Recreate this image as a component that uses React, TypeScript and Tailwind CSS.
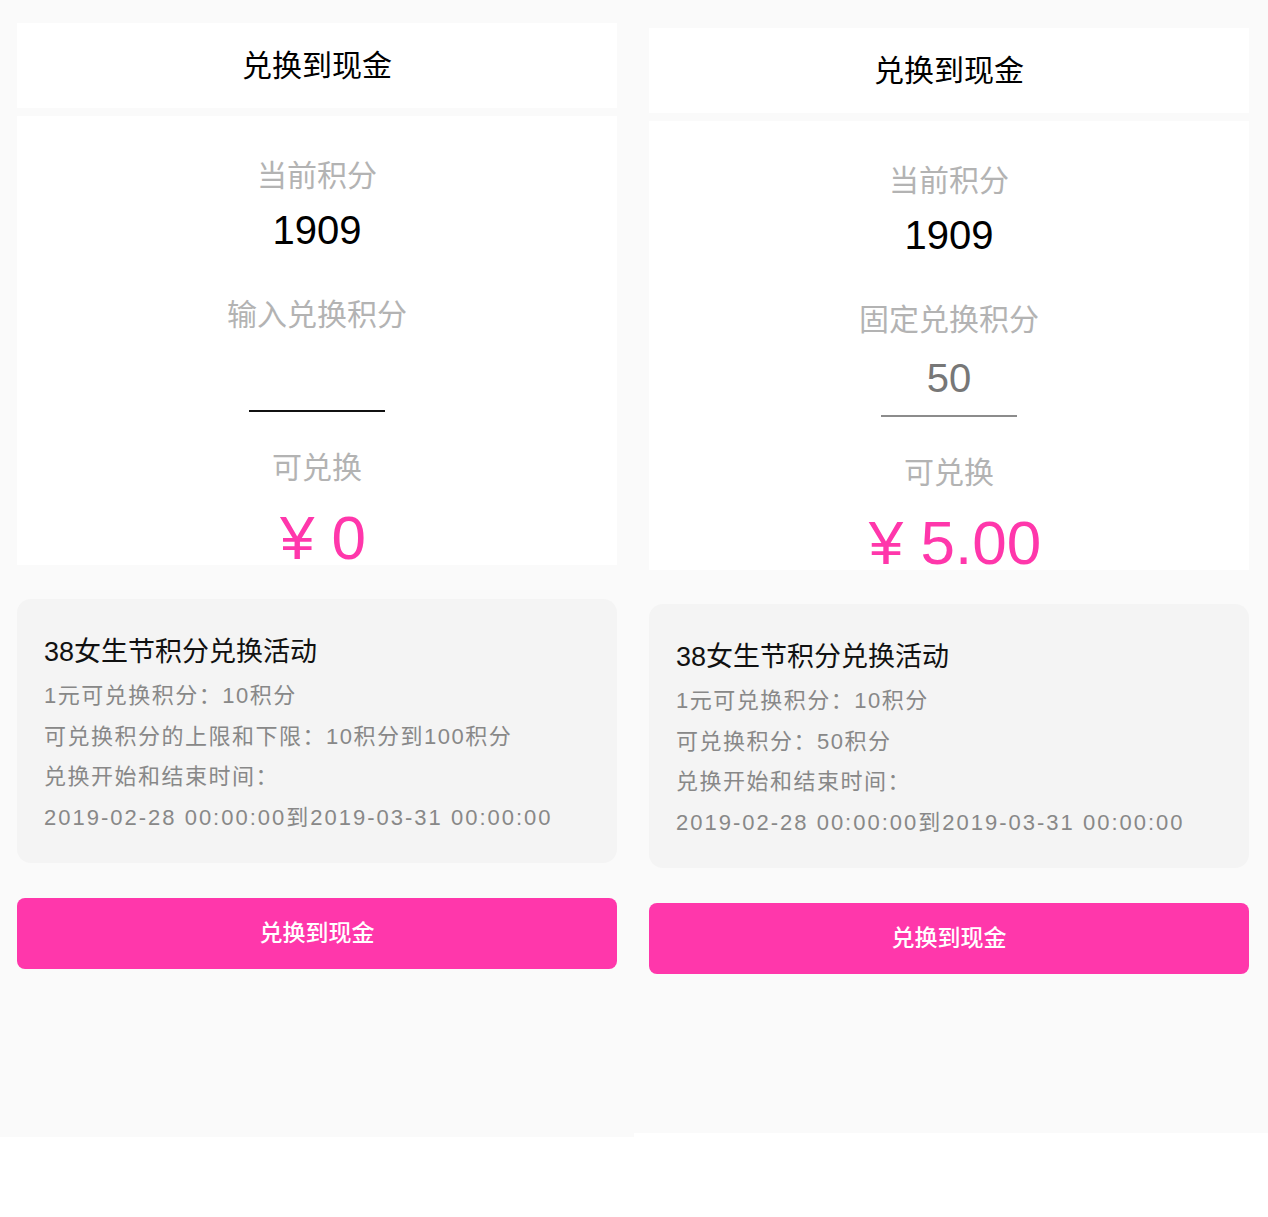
import React from "react";

const FONT = '"Liberation Sans", "Noto Sans CJK SC", sans-serif';

function Panel({ fixed }: { fixed: boolean }) {
  return (
    <div className="flex flex-col">
      <div className="shrink-0 h-[85px] bg-white flex items-center justify-center text-[30px] text-black leading-[42px]">
        兑换到现金
      </div>
      <div className="shrink-0 mt-[8px] h-[449px] bg-white flex flex-col items-center">
        <div className="shrink-0 mt-[39px] h-[42px] leading-[42px] text-[30px] text-[#b3b3b3]">当前积分</div>
        <div className="shrink-0 mt-[9px] h-[48px] leading-[48px] text-[40px] text-black">1909</div>
        <div className="shrink-0 mt-[40px] h-[42px] leading-[42px] text-[30px] text-[#b3b3b3]">
          {fixed ? "固定兑换积分" : "输入兑换积分"}
        </div>
        {fixed ? (
          <div className="shrink-0 w-[136px] h-[76px] border-b-2 border-[#8c8c8c] text-center leading-[74px] text-[40px] text-[#777777]">
            50
          </div>
        ) : (
          <input
            className="shrink-0 w-[136px] h-[76px] border-b-2 border-[#111111] bg-transparent outline-none text-center text-[40px]"
            style={{ fontFamily: FONT }}
          />
        )}
        <div className="shrink-0 mt-[35px] h-[42px] leading-[42px] text-[30px] text-[#b3b3b3]">可兑换</div>
        <div className="shrink-0 mt-[23px] h-[52px] leading-[52px] pl-[12px] text-[62px] text-[#ff37ab] whitespace-pre">
          {fixed ? "¥ 5.00" : "¥ 0"}
        </div>
      </div>
      <div className="shrink-0 mt-[34px] h-[264px] bg-[#f4f4f4] rounded-[14px] pl-[27px] pt-[33px]">
        <div className="h-[40px] leading-[40px] text-[27px] text-[#111111] whitespace-nowrap">38女生节积分兑换活动</div>
        <div className="mt-[4px] text-[22px] tracking-[1.5px] text-[#888888]">
          <div className="h-[40.5px] leading-[40.5px] whitespace-nowrap">1元可兑换积分：10积分</div>
          <div className="h-[40.5px] leading-[40.5px] whitespace-nowrap">
            {fixed ? "可兑换积分：50积分" : "可兑换积分的上限和下限：10积分到100积分"}
          </div>
          <div className="h-[40.5px] leading-[40.5px] whitespace-nowrap">兑换开始和结束时间：</div>
          <div className="h-[40.5px] leading-[40.5px] whitespace-nowrap tracking-[2px]">2019-02-28 00:00:00到2019-03-31 00:00:00</div>
        </div>
      </div>
      <button className="shrink-0 mt-[35px] h-[71px] rounded-[8px] bg-[#ff37ab] text-white text-[23px] font-medium flex items-center justify-center">
        兑换到现金
      </button>
    </div>
  );
}

export default function App() {
  return (
    <div className="flex items-start w-[1268px] h-[1217px] bg-white" style={{ fontFamily: FONT }}>
      <div className="w-[634px] h-[1137px] bg-[#fafafa] pt-[23px] px-[17px]">
        <Panel fixed={false} />
      </div>
      <div className="w-[634px] h-[1133px] bg-[#fafafa] pt-[28px] pl-[15px] pr-[19px]">
        <Panel fixed={true} />
      </div>
    </div>
  );
}
